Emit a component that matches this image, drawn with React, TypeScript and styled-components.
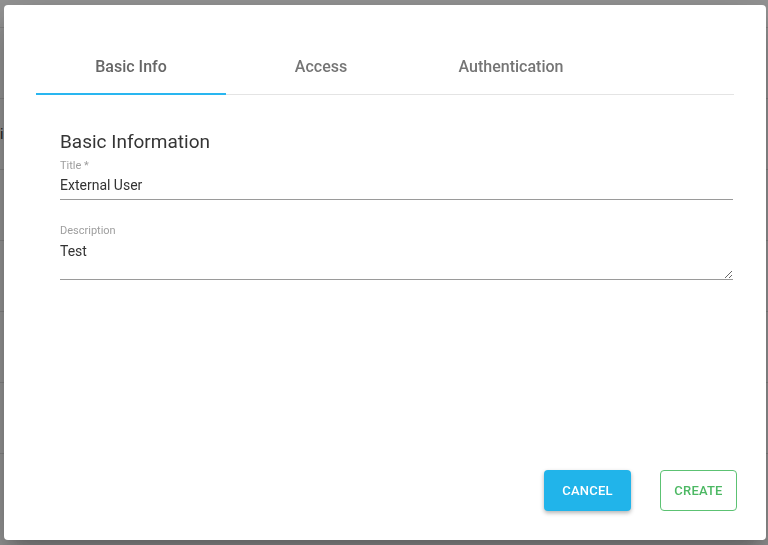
import React, { useState } from "react";
import styled, { createGlobalStyle } from "styled-components";

const GlobalStyle = createGlobalStyle`
html, body {
    margin: 0;
    padding: 0;
    height: 100%;
    overflow: hidden;
    font-family: Roboto, "Liberation Sans", Arial, sans-serif;
    background: #ffffff;
}
`;

const tabs = ["Basic Info", "Access", "Authentication"];

// the list page that sits behind the dialog
const BackPage = styled.div`
    padding-top: 27px;
`;

const BackRow = styled.div`
    height: 70px;
    border-top: 1px solid #e2e2e2;
    display: flex;
    align-items: center;
    font-size: 14px;
    color: #333;
`;

const Overlay = styled.div`
    position: fixed;
    inset: 0;
    background: rgba(0, 0, 0, 0.42);
`;

const Dialog = styled.div`
    position: fixed;
    left: 4px;
    top: 5px;
    width: 762px;
    height: 535px;
    box-sizing: border-box;
    background: #ffffff;
    border-radius: 4px;
    box-shadow: 0 11px 15px -7px rgba(0, 0, 0, 0.2), 0 24px 38px 3px rgba(0, 0, 0, 0.14), 0 9px 46px 8px rgba(0, 0, 0, 0.12);
    display: flex;
    flex-direction: column;
    padding: 37px 32px 29px 32px;
`;

const TabBar = styled.div`
    display: flex;
    border-bottom: 1px solid #e4e4e4;
`;

const Tab = styled.button<{ $active: boolean }>`
    width: 190px;
    height: 53px;
    padding: 0 0 2px 0;
    margin-bottom: -1px;
    background: transparent;
    border: none;
    border-bottom: 2px solid ${props => props.$active ? "#29b6f0" : "transparent"};
    font-family: inherit;
    font-size: 16px;
    font-weight: 500;
    color: ${props => props.$active ? "#666666" : "#757575"};
    cursor: pointer;
`;

const Content = styled.div`
    flex: 1;
    padding: 35px 1px 0 24px;
    display: flex;
    flex-direction: column;
`;

const Heading = styled.h2`
    margin: 0 0 5px 0;
    font-size: 19px;
    line-height: 24px;
    font-weight: 400;
    color: #353535;
`;

const Field = styled.label`
    display: flex;
    flex-direction: column;
    margin-bottom: 24px;
`;

const FieldLabel = styled.span`
    font-size: 11px;
    line-height: 14px;
    color: #9e9e9e;
`;

const TextInput = styled.input`
    border: none;
    border-bottom: 1px solid #9a9a9a;
    padding: 3px 0 5px 0;
    font-family: inherit;
    font-size: 14px;
    line-height: 18px;
    color: #333;
    outline: none;
    background: transparent;
`;

const TextArea = styled.textarea`
    border: none;
    border-bottom: 1px solid #9a9a9a;
    padding: 4px 0 0 0;
    height: 42px;
    box-sizing: border-box;
    font-family: inherit;
    font-size: 14px;
    line-height: 18px;
    color: #333;
    outline: none;
    background: transparent;
    resize: vertical;
`;

const Actions = styled.div`
    display: flex;
    justify-content: flex-end;
    gap: 29px;
    margin-right: -3px;
`;

const ActionButton = styled.button<{ $variant: "filled" | "outline" }>`
    height: 41px;
    width: ${props => props.$variant === "filled" ? "87px" : "77px"};
    padding: 0;
    box-sizing: border-box;
    border-radius: 4px;
    font-family: inherit;
    font-size: 13px;
    font-weight: 500;
    letter-spacing: 0.2px;
    cursor: pointer;
    background: ${props => props.$variant === "filled" ? "#21b4ea" : "#ffffff"};
    color: ${props => props.$variant === "filled" ? "#ffffff" : "#4cb863"};
    border: ${props => props.$variant === "filled" ? "none" : "1px solid #5cc273"};
    box-shadow: ${props => props.$variant === "filled" ? "0 2px 4px rgba(0, 0, 0, 0.3)" : "none"};
`;

export default function App() {
    const [activeTab, setActiveTab] = useState(0);
    const [title, setTitle] = useState("External User");
    const [description, setDescription] = useState("Test");

    return (
        <>
            <GlobalStyle />
            <BackPage>
                {[0, 1, 2, 3, 4, 5, 6].map(i => (
                    <BackRow key={i}>{i === 1 ? "i" : null}</BackRow>
                ))}
            </BackPage>
            <Overlay />
            <Dialog>
                <TabBar>
                    {tabs.map((t, i) => (
                        <Tab key={t} $active={i === activeTab} onClick={() => setActiveTab(i)}>{t}</Tab>
                    ))}
                </TabBar>
                <Content>
                    <Heading>Basic Information</Heading>
                    <Field>
                        <FieldLabel>Title *</FieldLabel>
                        <TextInput value={title} onChange={e => setTitle(e.target.value)} />
                    </Field>
                    <Field>
                        <FieldLabel>Description</FieldLabel>
                        <TextArea value={description} onChange={e => setDescription(e.target.value)} />
                    </Field>
                </Content>
                <Actions>
                    <ActionButton $variant="filled">CANCEL</ActionButton>
                    <ActionButton $variant="outline">CREATE</ActionButton>
                </Actions>
            </Dialog>
        </>
    );
}
